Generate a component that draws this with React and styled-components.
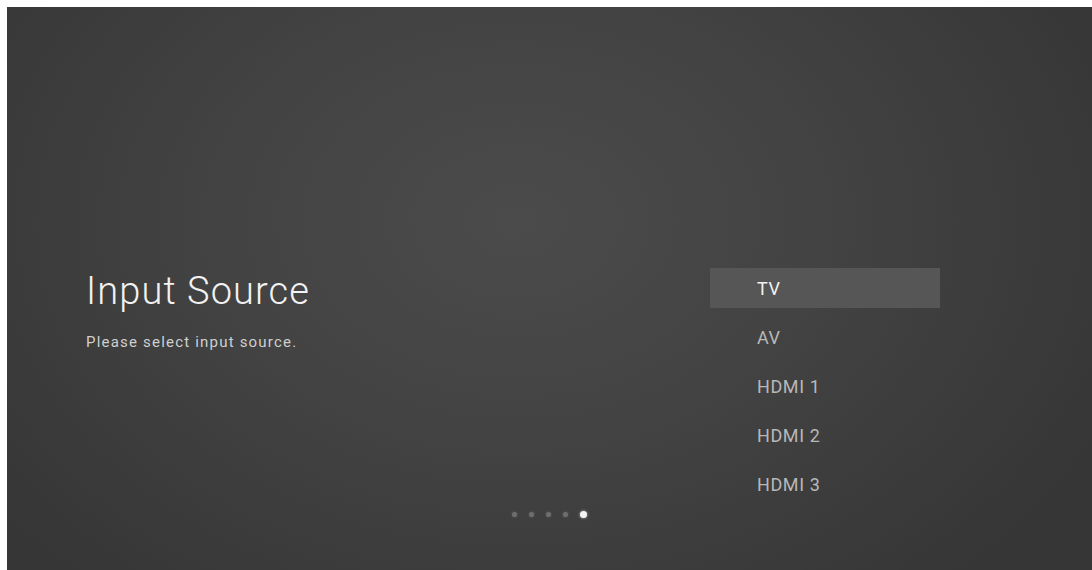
import React from 'react';
import styled, { createGlobalStyle } from 'styled-components';

const GlobalStyle = createGlobalStyle`
  html, body {
    margin: 0;
    padding: 0;
    background: #ffffff;
    overflow: hidden;
  }
  body {
    font-family: Roboto, "Liberation Sans", Arial, sans-serif;
  }
`;

const Screen = styled.div`
  position: relative;
  margin: 7px 0 0 7px;
  width: 1085px;
  height: 563px;
  box-sizing: border-box;
  padding: 262px 0 0 79px;
  display: flex;
  align-items: flex-start;
  background: radial-gradient(ellipse 60% 85% at 47% 38%, #4b4b4b 0%, #434343 45%, #363636 100%);
`;

const Intro = styled.div`
  width: 624px;
  display: flex;
  flex-direction: column;
`;

const Title = styled.h1`
  margin: 0;
  font-size: 38px;
  line-height: 44px;
  font-weight: 300;
  color: #f2f2f2;
  letter-spacing: 1.1px;
`;

const Subtitle = styled.p`
  margin: 19px 0 0;
  font-size: 15px;
  line-height: 20px;
  color: #cfcfcf;
  letter-spacing: 1.2px;
`;

const SourceList = styled.ul`
  list-style: none;
  margin: -1px 0 0;
  padding: 0;
  width: 230px;
  display: flex;
  flex-direction: column;
  gap: 9px;
`;

const SourceItem = styled.li`
  height: 40px;
  display: flex;
  align-items: center;
  padding-left: 47px;
  font-size: 18px;
  letter-spacing: 0.6px;
  color: ${(p) => (p.$active ? '#f2f2f2' : '#b8b8b8')};
  background: ${(p) => (p.$active ? '#565656' : 'transparent')};
`;

const Pager = styled.div`
  position: absolute;
  left: 0;
  right: 0;
  bottom: 52px;
  display: flex;
  justify-content: center;
  align-items: center;
  gap: 12px;
`;

const Dot = styled.span`
  width: ${(p) => (p.$active ? 7 : 5)}px;
  height: ${(p) => (p.$active ? 7 : 5)}px;
  border-radius: 50%;
  background: ${(p) => (p.$active ? '#f4f4f4' : '#6e6e6e')};
  box-shadow: 0 0 3px ${(p) => (p.$active ? 'rgba(255,255,255,0.6)' : 'rgba(120,120,120,0.6)')};
`;

const sources = ['TV', 'AV', 'HDMI 1', 'HDMI 2', 'HDMI 3'];

const App = () => {
  return (
    <>
      <GlobalStyle />
      <Screen>
        <Intro>
          <Title>Input Source</Title>
          <Subtitle>Please select input source.</Subtitle>
        </Intro>
        <SourceList>
          {sources.map((s, i) => (
            <SourceItem key={s} $active={i === 0}>
              {s}
            </SourceItem>
          ))}
        </SourceList>
        <Pager>
          {[0, 1, 2, 3, 4].map((i) => (
            <Dot key={i} $active={i === 4} />
          ))}
        </Pager>
      </Screen>
    </>
  );
};

export default App;
